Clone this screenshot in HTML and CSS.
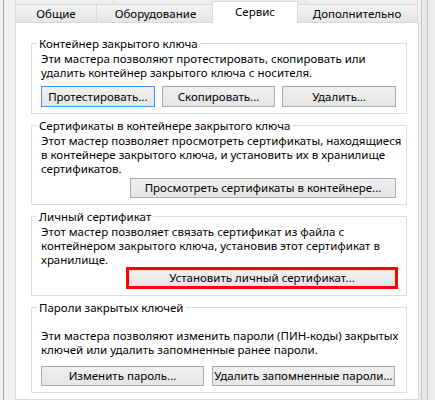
FILE: index.html
```html
<!DOCTYPE html>
<html lang="ru">
<head>
<meta charset="utf-8">
<title>Сервис</title>
<link rel="stylesheet" href="styles.css">
</head>
<body>
<div class="window">
  <div class="frame-left"></div>
  <div class="dialog">
    <div class="tabs-back">
      <div class="tab-back tb-1"></div>
      <div class="tab-back tb-2"></div>
      <div class="tab-back tb-3"></div>
    </div>
    <div class="tabs">
      <div class="tab tab-general">Общие</div>
      <div class="tab tab-hardware">Оборудование</div>
      <div class="tab tab-active tab-service">Сервис</div>
      <div class="tab tab-extra">Дополнительно</div>
    </div>
    <div class="panel">
      <fieldset class="group">
        <legend>Контейнер закрытого ключа</legend>
        <p class="desc">Эти мастера позволяют протестировать, скопировать или<br>удалить контейнер закрытого ключа с носителя.</p>
        <div class="row-three">
          <button class="btn btn-default">Протестировать...</button>
          <button class="btn">Скопировать...</button>
          <button class="btn">Удалить...</button>
        </div>
      </fieldset>
      <fieldset class="group">
        <legend>Сертификаты в контейнере закрытого ключа</legend>
        <p class="desc">Этот мастер позволяет просмотреть сертификаты, находящиеся<br>в контейнере закрытого ключа, и установить их в хранилище<br>сертификатов.</p>
        <div class="row-single">
          <button class="btn btn-view">Просмотреть сертификаты в контейнере...</button>
        </div>
      </fieldset>
      <fieldset class="group">
        <legend>Личный сертификат</legend>
        <p class="desc">Этот мастер позволяет связать сертификат из файла с<br>контейнером закрытого ключа, установив этот сертификат в<br>хранилище.</p>
        <div class="row-callout">
          <div class="callout">
            <button class="btn btn-install">Установить личный сертификат...</button>
          </div>
        </div>
      </fieldset>
      <fieldset class="group">
        <legend>Пароли закрытых ключей</legend>
        <p class="desc desc-spaced">Эти мастера позволяют изменить пароли (ПИН-коды) закрытых<br>ключей или удалить запомненные ранее пароли.</p>
        <div class="row-two">
          <button class="btn btn-change">Изменить пароль...</button>
          <button class="btn btn-forget">Удалить запомненные пароли...</button>
        </div>
      </fieldset>
    </div>
  </div>
  <div class="frame-right">
    <div class="frame-line"></div>
    <div class="frame-line frame-line-outer"></div>
  </div>
</div>
</body>
</html>
```

FILE: styles.css
```css
* {
  box-sizing: border-box;
}

html,
body {
  margin: 0;
}

body {
  width: 435px;
  height: 400px;
  overflow: hidden;
  background: #f0f0f0;
  font-family: "Noto Sans", "Open Sans", sans-serif;
  font-size: 11.5px;
  color: #000;
}

.window {
  display: flex;
  height: 400px;
}

.frame-left {
  flex: none;
  width: 12px;
  margin-left: 3px;
  border-left: 1px solid #a6a6a6;
}

.dialog {
  flex: none;
  width: 404px;
  display: flex;
  flex-direction: column;
}

.tabs-back {
  flex: none;
  display: flex;
  height: 4px;
}

.tab-back {
  height: 4px;
  border-left: 1px solid #d9d9d9;
  border-right: 1px solid #d9d9d9;
  background: #ededed;
}

.tb-1 {
  width: 99px;
}

.tb-2 {
  width: 193px;
  margin-left: -1px;
}

.tb-3 {
  width: 113px;
  margin-left: -1px;
}

.tabs {
  flex: none;
  display: flex;
  align-items: flex-end;
  height: 18px;
}

.tab {
  flex: none;
  height: 18px;
  border: 1px solid #d9d9d9;
  border-bottom: none;
  background: linear-gradient(#f2f2f2, #e6e6e6);
  display: flex;
  align-items: center;
  justify-content: center;
  line-height: 14px;
  white-space: nowrap;
}

.tab-general {
  width: 82px;
}

.tab-hardware {
  width: 119px;
  margin-left: -1px;
}

.tab-active {
  position: relative;
  z-index: 1;
  height: 22px;
  margin-bottom: -1px;
  padding-bottom: 1px;
  background: #fff;
}

.tab-service {
  width: 86px;
  margin-left: -3px;
}

.tab-extra {
  width: 122px;
  margin-left: -2px;
}

.panel {
  flex: 1;
  background: #fff;
  border: 1px solid #d9d9d9;
  padding: 14px 11px 0 15px;
}

.group {
  margin: 0;
  min-width: 0;
  border: 1px solid #dcdcdc;
  padding: 0 10px 6px 9px;
}

.group + .group {
  margin-top: 5px;
}

.group legend {
  height: 13px;
  line-height: 13px;
  padding: 0 2px;
  margin-left: -4px;
}

.desc {
  margin: 2px 0 0;
  line-height: 14px;
  white-space: nowrap;
}

.desc-spaced {
  margin-top: 15px;
}

.btn {
  font: inherit;
  color: #000;
  height: 20px;
  padding: 0;
  line-height: 14px;
  border: 1px solid #acacac;
  background: linear-gradient(#f0f0f0, #e5e5e5);
  white-space: nowrap;
}

.btn-default {
  border-color: #3399ff;
}

.row-three {
  display: grid;
  grid-template-columns: repeat(3, 1fr);
  gap: 7px;
  margin-top: 6px;
}

.row-three .btn {
  height: 21px;
}

.row-single {
  display: flex;
  justify-content: flex-end;
  margin-top: 2px;
}

.btn-view {
  width: 266px;
}

.row-callout {
  display: flex;
  justify-content: flex-end;
  margin-top: 0;
  margin-right: -2px;
}

.callout {
  width: 272px;
  height: 22px;
  border: 3px solid #ff0000;
  display: flex;
}

.btn-install {
  flex: 1;
  height: 16px;
  border-color: #e2e2e2;
}

.row-two {
  display: flex;
  gap: 8px;
  margin-top: 9px;
}

.btn-change {
  width: 163px;
}

.btn-forget {
  width: 183px;
}

.frame-right {
  flex: 1;
  display: flex;
  padding-left: 2px;
}

.frame-line {
  width: 6px;
  border-left: 1px solid #c4c4c4;
  background: #e9e9e9;
}

.frame-line-outer {
  flex: 1;
  width: auto;
  background: #eeeeee;
}
```
